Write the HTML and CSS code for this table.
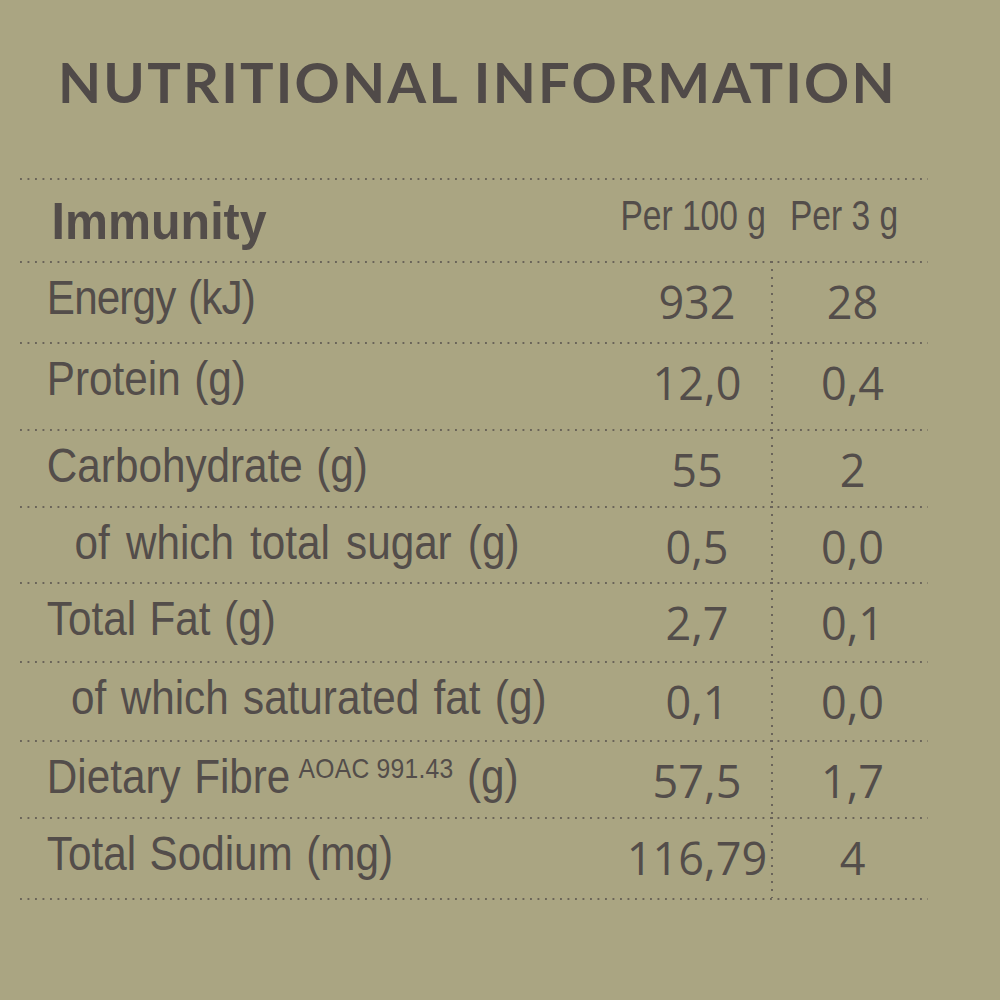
FILE: index.html
```html
<!DOCTYPE html>
<html lang="en">
<head>
<meta charset="utf-8">
<title>Nutritional Information</title>
<link rel="stylesheet" href="styles.css">
</head>
<body>
<main class="page">
  <h1 class="title">NUTRITIONAL INFORMATION</h1>
  <div class="table">
    <div class="row head">
      <div class="name">Immunity</div>
      <div class="col1 hcell">Per 100 g</div>
      <div class="col2 hcell">Per 3 g</div>
    </div>
    <div class="row">
      <div class="label tight">Energy (kJ)</div>
      <div class="num col1">932</div>
      <div class="num col2 sep">28</div>
    </div>
    <div class="row">
      <div class="label">Protein (g)</div>
      <div class="num col1">12,0</div>
      <div class="num col2 sep">0,4</div>
    </div>
    <div class="row">
      <div class="label">Carbohydrate (g)</div>
      <div class="num col1">55</div>
      <div class="num col2 sep">2</div>
    </div>
    <div class="row">
      <div class="label indent">of which total sugar (g)</div>
      <div class="num col1">0,5</div>
      <div class="num col2 sep">0,0</div>
    </div>
    <div class="row">
      <div class="label">Total Fat (g)</div>
      <div class="num col1">2,7</div>
      <div class="num col2 sep">0,1</div>
    </div>
    <div class="row">
      <div class="label indent-sm">of which saturated fat (g)</div>
      <div class="num col1">0,1</div>
      <div class="num col2 sep">0,0</div>
    </div>
    <div class="row">
      <div class="label">Dietary Fibre <span class="sup">AOAC 991.43</span> (g)</div>
      <div class="num col1">57,5</div>
      <div class="num col2 sep">1,7</div>
    </div>
    <div class="row">
      <div class="label">Total Sodium (mg)</div>
      <div class="num col1">116,79</div>
      <div class="num col2 sep">4</div>
    </div>
  </div>
</main>
</body>
</html>
```

FILE: styles.css
```css
:root {
  --bg: #aaa582;
  --ink: #534d4a;
  --dot: #6a6459;
}

html, body {
  margin: 0;
  padding: 0;
  background: var(--bg);
}

body {
  width: 1000px;
  height: 1000px;
  overflow: hidden;
  color: var(--ink);
  font-family: "Liberation Sans", Arial, sans-serif;
}

.page {
  padding-top: 54px;
}

.title {
  margin: 0 0 0 58px;
  font-family: Lato, "Liberation Sans", sans-serif;
  font-weight: 700;
  font-size: 56px;
  line-height: 56px;
  letter-spacing: 2.2px;
  color: #504a48;
  white-space: nowrap;
}

.table {
  margin: 68px 0 0 20px;
  width: 908px;
  padding-bottom: 2px;
  background: linear-gradient(to right, var(--dot) 2px, transparent 2px) left bottom / 7.5px 2px repeat-x;
}

.row {
  display: grid;
  grid-template-columns: minmax(0, 1fr) 148px 157px;
  height: 79px;
  background: linear-gradient(to right, var(--dot) 2px, transparent 2px) left top / 7.5px 2px repeat-x;
}

.row:nth-child(1) { height: 83px; }
.row:nth-child(2) { height: 81px; }
.row:nth-child(3) { height: 87px; }
.row:nth-child(4) { height: 77px; }
.row:nth-child(5) { height: 76px; }
.row:nth-child(6) { height: 79px; }
.row:nth-child(7) { height: 79px; }
.row:nth-child(8) { height: 77px; }
.row:nth-child(9) { height: 81px; }

.name {
  padding: 17px 0 0 34px;
  font-weight: 700;
  font-size: 52px;
  line-height: 1;
  white-space: nowrap;
  transform: scaleX(0.93);
  transform-origin: left center;
}

.hcell {
  display: flex;
  justify-content: center;
  align-items: flex-start;
  padding-top: 16px;
  font-size: 43px;
  line-height: 1;
  white-space: nowrap;
  transform: scaleX(0.78);
  transform-origin: center center;
}

.head .col1 { padding-right: 10px; }
.head .col2 { padding-right: 14px; }

.label {
  padding: 13px 0 0 30.5px;
  font-size: 48px;
  line-height: 1;
  word-spacing: 2px;
  white-space: nowrap;
  transform: scaleX(0.88);
  transform-origin: left center;
}

.label.tight { letter-spacing: -1px; }
.label.indent { padding-left: 62px; word-spacing: 5px; }
.label.indent-sm { padding-left: 58px; word-spacing: 3px; }

.sup {
  display: inline-block;
  vertical-align: top;
  padding-top: 2px;
  margin-left: -6px;
  font-size: 28px;
  letter-spacing: 0.3px;
  word-spacing: 0;
  line-height: 1;
}

.num {
  display: flex;
  justify-content: center;
  align-items: flex-start;
  padding-top: 18px;
  font-family: "Open Sans", "Liberation Sans", sans-serif;
  font-size: 45px;
  line-height: 1;
  white-space: nowrap;
}

.num.col2 { padding-left: 6px; }

.sep {
  background: linear-gradient(to bottom, var(--dot) 2px, transparent 2px) left top / 2px 8px repeat-y;
}
```
